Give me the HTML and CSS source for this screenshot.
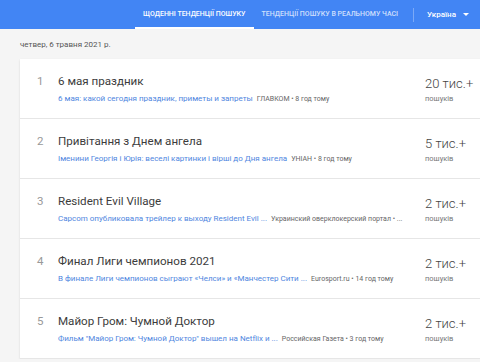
FILE: index.html
```html
<!DOCTYPE html>
<html lang="uk">
<head>
  <meta charset="UTF-8">
  <meta name="viewport" content="width=device-width, initial-scale=1.0">
  <title>Google Trends</title>
  <link rel="stylesheet" href="styles.css">
</head>
<body>
  <header class="topbar">
    <nav class="tabs">
      <a class="tab active" href="#">Щоденні тенденції пошуку</a>
      <a class="tab" href="#">Тенденції пошуку в реальному часі</a>
    </nav>
    <div class="divider"></div>
    <div class="region">Україна <span class="caret"></span></div>
  </header>

  <main class="content">
    <div class="date">четвер, 6 травня 2021 р.</div>
    <div class="card">
      <div class="row">
        <div class="index">1</div>
        <div class="details">
          <div class="title">6 мая праздник</div>
          <div class="summary"><a href="#">6 мая: какой сегодня праздник, приметы и запреты</a><span class="source">ГЛАВКОМ • 8 год тому</span></div>
        </div>
        <div class="count">
          <div class="amount">20 тис.+</div>
          <div class="label">пошуків</div>
        </div>
      </div>
      <div class="row">
        <div class="index">2</div>
        <div class="details">
          <div class="title">Привітання з Днем ангела</div>
          <div class="summary"><a href="#">Іменини Георгія і Юрія: веселі картинки і вірші до Дня ангела</a><span class="source">УНІАН • 8 год тому</span></div>
        </div>
        <div class="count">
          <div class="amount">5 тис.+</div>
          <div class="label">пошуків</div>
        </div>
      </div>
      <div class="row">
        <div class="index">3</div>
        <div class="details">
          <div class="title">Resident Evil Village</div>
          <div class="summary"><a href="#">Capcom опубликовала трейлер к выходу Resident Evil ...</a><span class="source">Украинский оверклокерский портал • ...</span></div>
        </div>
        <div class="count">
          <div class="amount">2 тис.+</div>
          <div class="label">пошуків</div>
        </div>
      </div>
      <div class="row">
        <div class="index">4</div>
        <div class="details">
          <div class="title">Финал Лиги чемпионов 2021</div>
          <div class="summary"><a href="#">В финале Лиги чемпионов сыграют «Челси» и «Манчестер Сити ...</a><span class="source">Eurosport.ru • 14 год тому</span></div>
        </div>
        <div class="count">
          <div class="amount">2 тис.+</div>
          <div class="label">пошуків</div>
        </div>
      </div>
      <div class="row">
        <div class="index">5</div>
        <div class="details">
          <div class="title">Майор Гром: Чумной Доктор</div>
          <div class="summary"><a href="#">Фильм "Майор Гром: Чумной Доктор" вышел на Netflix и ...</a><span class="source">Российская Газета • 3 год тому</span></div>
        </div>
        <div class="count">
          <div class="amount">2 тис.+</div>
          <div class="label">пошуків</div>
        </div>
      </div>
    </div>
  </main>
</body>
</html>
```

FILE: styles.css
```css
body {
  font-family: Roboto, "Liberation Sans", Arial, sans-serif;
  margin: 0;
  padding: 0;
  background-color: #f5f5f5;
  overflow: hidden;
}
.topbar {
  display: flex;
  align-items: center;
  height: 29px;
  padding-left: 135px;
  background-color: #4285f4;
  color: #fff;
}
.tabs {
  display: flex;
  height: 100%;
}
.tab {
  display: flex;
  align-items: center;
  padding: 0 8px;
  padding-top: 1px;
  font-size: 7px;
  font-weight: 500;
  text-transform: uppercase;
  text-decoration: none;
  color: rgba(255, 255, 255, 0.75);
  border-bottom: 2px solid transparent;
  box-sizing: border-box;
}
.tab.active {
  color: #fff;
  border-bottom-color: #fff;
}
.divider {
  width: 1px;
  height: 14px;
  margin: 0 13px 0 7px;
  background-color: rgba(255, 255, 255, 0.3);
}
.region {
  display: flex;
  align-items: center;
  font-size: 8px;
  font-weight: 500;
}
.caret {
  margin-left: 7px;
  border-left: 3.5px solid transparent;
  border-right: 3.5px solid transparent;
  border-top: 3.5px solid #fff;
}
.content {
  padding: 10px 0 0 20px;
}
.date {
  font-size: 8px;
  color: #555;
  line-height: 12px;
  margin-bottom: 8px;
}
.card {
  width: 470px;
  background-color: #fff;
  box-shadow: 0 1px 2px rgba(0, 0, 0, 0.12);
}
.row {
  display: flex;
  height: 60px;
  box-sizing: border-box;
  padding: 14px 0 0 17px;
  border-bottom: 1px solid #e6e6e6;
}
.index {
  width: 21px;
  font-size: 11.5px;
  line-height: 16px;
  color: #999;
}
.details {
  flex: 1;
  min-width: 0;
}
.title {
  font-size: 11.6px;
  line-height: 16px;
  color: #3c3c3c;
}
.summary {
  margin-top: 4px;
  font-size: 8px;
  line-height: 12px;
  white-space: nowrap;
}
.summary a {
  color: #4f86e0;
  text-decoration: none;
}
.source {
  margin-left: 4px;
  font-size: 7px;
  color: #666;
}
.count {
  width: 65px;
  padding-top: 2px;
}
.amount {
  font-size: 13px;
  font-weight: 300;
  line-height: 17px;
  color: #444;
}
.label {
  margin-top: 1px;
  font-size: 7.5px;
  line-height: 12px;
  color: #777;
}
```
